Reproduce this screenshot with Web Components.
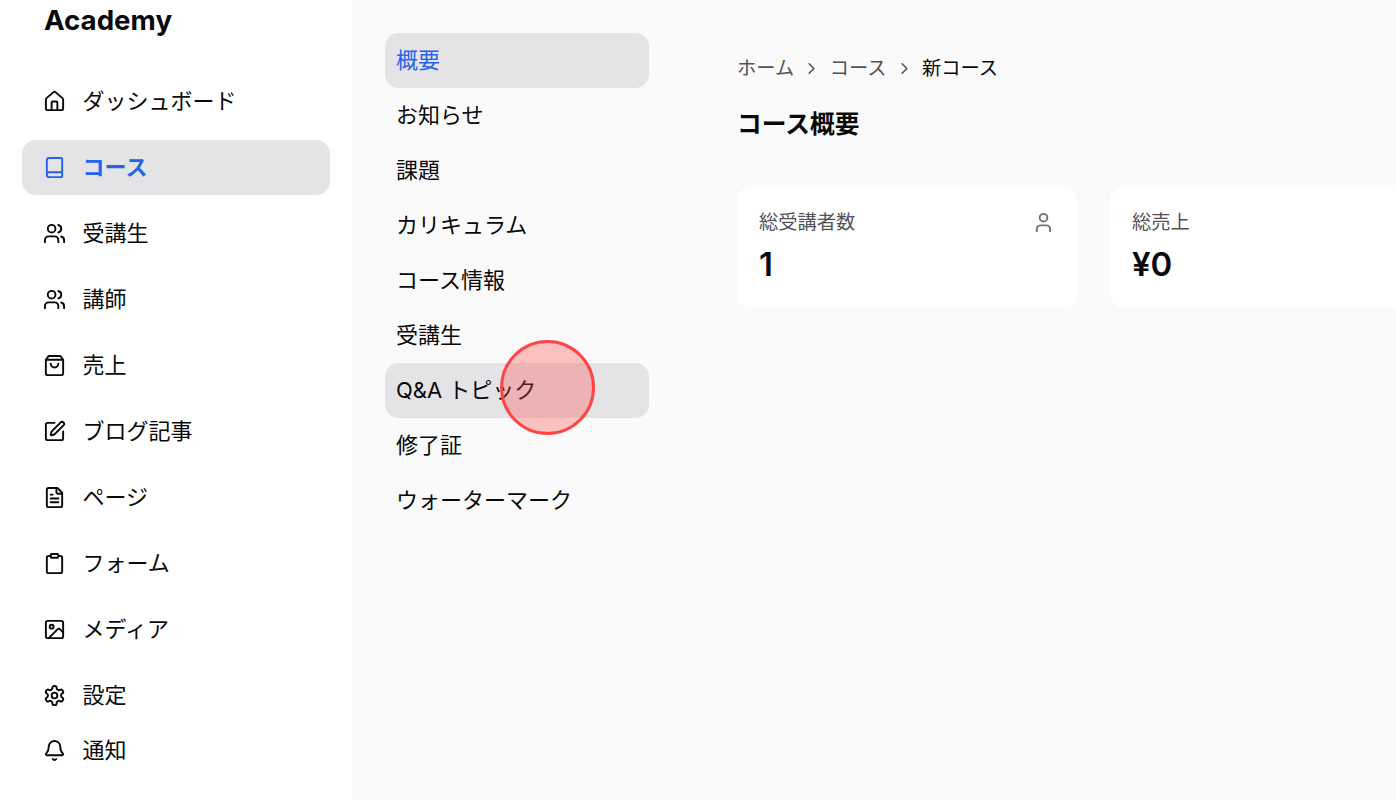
<!DOCTYPE html>
<html lang="ja">
<head>
<meta charset="utf-8">
<title>Academy</title>
<style>
  html, body {
    margin: 0;
    height: 100%;
    overflow: hidden;
    background: #fafafa;
    color: #09090b;
    font-family: Inter, "Noto Sans CJK JP", sans-serif;
  }
</style>
</head>
<body>
<app-shell>
  <side-bar slot="sidebar"></side-bar>
  <course-menu slot="menu"></course-menu>
  <course-overview slot="main"></course-overview>
</app-shell>
<click-marker></click-marker>

<script>
const ICONS = {
  home: `<path d="M15 21v-8a1 1 0 0 0-1-1h-4a1 1 0 0 0-1 1v8"/><path d="M3 10a2 2 0 0 1 .709-1.528l7-5.999a2 2 0 0 1 2.582 0l7 5.999A2 2 0 0 1 21 10v9a2 2 0 0 1-2 2H5a2 2 0 0 1-2-2z"/>`,
  book: `<path d="M4 19.5v-15A2.5 2.5 0 0 1 6.5 2H19a1 1 0 0 1 1 1v18a1 1 0 0 1-1 1H6.5a1 1 0 0 1 0-5H20"/>`,
  users: `<path d="M16 21v-2a4 4 0 0 0-4-4H6a4 4 0 0 0-4 4v2"/><circle cx="9" cy="7" r="4"/><path d="M22 21v-2a4 4 0 0 0-3-3.87"/><path d="M16 3.13a4 4 0 0 1 0 7.75"/>`,
  bag: `<path d="M6 2 3 6v14a2 2 0 0 0 2 2h14a2 2 0 0 0 2-2V6l-3-4Z"/><path d="M3 6h18"/><path d="M16 10a4 4 0 0 1-8 0"/>`,
  pen: `<path d="M12 3H5a2 2 0 0 0-2 2v14a2 2 0 0 0 2 2h14a2 2 0 0 0 2-2v-7"/><path d="M18.375 2.625a1 1 0 0 1 3 3l-9.013 9.014a2 2 0 0 1-.853.505l-2.873.84a.5.5 0 0 1-.62-.62l.84-2.873a2 2 0 0 1 .506-.852z"/>`,
  file: `<path d="M15 2H6a2 2 0 0 0-2 2v16a2 2 0 0 0 2 2h12a2 2 0 0 0 2-2V7Z"/><path d="M14 2v4a2 2 0 0 0 2 2h4"/><path d="M10 9H8"/><path d="M16 13H8"/><path d="M16 17H8"/>`,
  clipboard: `<rect width="8" height="4" x="8" y="2" rx="1" ry="1"/><path d="M16 4h2a2 2 0 0 1 2 2v14a2 2 0 0 1-2 2H6a2 2 0 0 1-2-2V6a2 2 0 0 1 2-2h2"/>`,
  image: `<rect width="18" height="18" x="3" y="3" rx="2" ry="2"/><circle cx="9" cy="9" r="2"/><path d="m21 15-3.086-3.086a2 2 0 0 0-2.828 0L6 21"/>`,
  settings: `<path d="M12.22 2h-.44a2 2 0 0 0-2 2v.18a2 2 0 0 1-1 1.73l-.43.25a2 2 0 0 1-2 0l-.15-.08a2 2 0 0 0-2.73.73l-.22.38a2 2 0 0 0 .73 2.73l.15.1a2 2 0 0 1 1 1.72v.51a2 2 0 0 1-1 1.74l-.15.09a2 2 0 0 0-.73 2.73l.22.38a2 2 0 0 0 2.73.73l.15-.08a2 2 0 0 1 2 0l.43.25a2 2 0 0 1 1 1.73V20a2 2 0 0 0 2 2h.44a2 2 0 0 0 2-2v-.18a2 2 0 0 1 1-1.73l.43-.25a2 2 0 0 1 2 0l.15.08a2 2 0 0 0 2.73-.73l.22-.39a2 2 0 0 0-.73-2.73l-.15-.08a2 2 0 0 1-1-1.74v-.5a2 2 0 0 1 1-1.74l.15-.09a2 2 0 0 0 .73-2.73l-.22-.38a2 2 0 0 0-2.73-.73l-.15.08a2 2 0 0 1-2 0l-.43-.25a2 2 0 0 1-1-1.73V4a2 2 0 0 0-2-2z"/><circle cx="12" cy="12" r="3"/>`,
  bell: `<path d="M10.268 21a2 2 0 0 0 3.464 0"/><path d="M3.262 15.326A1 1 0 0 0 4 17h16a1 1 0 0 0 .74-1.673C19.41 13.956 18 12.499 18 8A6 6 0 0 0 6 8c0 4.499-1.411 5.956-2.738 7.326"/>`,
  user: `<path d="M19 21v-2a4 4 0 0 0-4-4H9a4 4 0 0 0-4 4v2"/><circle cx="12" cy="7" r="4"/>`,
  chevron: `<path d="m9 18 6-6-6-6"/>`,
};

function icon(name, size = 23) {
  return `<svg xmlns="http://www.w3.org/2000/svg" width="${size}" height="${size}" viewBox="0 0 24 24" fill="none" stroke="currentColor" stroke-width="2" stroke-linecap="round" stroke-linejoin="round">${ICONS[name]}</svg>`;
}

class AppShell extends HTMLElement {
  connectedCallback() {
    const shadow = this.attachShadow({ mode: "open" });
    shadow.innerHTML = `
      <style>
      :host {
        display: grid;
        grid-template-columns: 352px 330px 1fr;
        height: 800px;
        overflow: hidden;
      }
      </style>
      <slot name="sidebar"></slot>
      <slot name="menu"></slot>
      <slot name="main"></slot>
    `;
  }
}

class NavLink extends HTMLElement {
  connectedCallback() {
    const shadow = this.attachShadow({ mode: "open" });
    shadow.innerHTML = `
      <style>
      :host {
        display: flex;
        align-items: center;
        gap: 16.5px;
        height: 55px;
        padding: 0 21px;
        border-radius: 13.75px;
        font-size: 22px;
        line-height: 33px;
      }
      :host([active]) {
        background: #e4e4e7;
        color: #2563eb;
        font-weight: 600;
      }
      svg { flex: none; display: block; }
      </style>
      ${icon(this.getAttribute("icon"))}
      <slot></slot>
    `;
  }
}

class SideBar extends HTMLElement {
  connectedCallback() {
    const shadow = this.attachShadow({ mode: "open" });
    const links = [
      ["home", "ダッシュボード"],
      ["book", "コース", true],
      ["users", "受講生"],
      ["users", "講師"],
      ["bag", "売上"],
      ["pen", "ブログ記事"],
      ["file", "ページ"],
      ["clipboard", "フォーム"],
      ["image", "メディア"],
      ["settings", "設定"],
    ];
    shadow.innerHTML = `
      <style>
      :host {
        display: flex;
        flex-direction: column;
        background: #fff;
        padding: 0 22px;
        overflow: hidden;
      }
      .logo {
        margin: 0 0 36px 22px;
        padding-top: 2px;
        font-size: 27.7px;
        line-height: 36px;
        font-weight: 700;
      }
      nav { display: flex; flex-direction: column; gap: 11px; }
      </style>
      <div class="logo">Academy</div>
      <nav>
        ${links.map(([name, label, active]) =>
          `<nav-link icon="${name}"${active ? " active" : ""}>${label}</nav-link>`).join("")}
      </nav>
      <nav-link icon="bell">通知</nav-link>
    `;
  }
}

class MenuItem extends HTMLElement {
  connectedCallback() {
    const shadow = this.attachShadow({ mode: "open" });
    shadow.innerHTML = `
      <style>
      :host {
        display: flex;
        align-items: center;
        height: 55px;
        padding: 0 11px;
        border-radius: 13.75px;
        font-size: 22px;
        line-height: 33px;
      }
      :host([active]) { background: #e4e4e7; color: #2563eb; }
      :host([hover]) { background: #e4e4e7; }
      </style>
      <slot></slot>
    `;
  }
}

class CourseMenu extends HTMLElement {
  connectedCallback() {
    const shadow = this.attachShadow({ mode: "open" });
    shadow.innerHTML = `
      <style>
      :host {
        display: flex;
        flex-direction: column;
        padding: 33px;
      }
      </style>
      <menu-item active>概要</menu-item>
      <menu-item>お知らせ</menu-item>
      <menu-item>課題</menu-item>
      <menu-item>カリキュラム</menu-item>
      <menu-item>コース情報</menu-item>
      <menu-item>受講生</menu-item>
      <menu-item hover>Q&amp;A トピック</menu-item>
      <menu-item>修了証</menu-item>
      <menu-item>ウォーターマーク</menu-item>
    `;
  }
}

class BreadCrumb extends HTMLElement {
  connectedCallback() {
    const shadow = this.attachShadow({ mode: "open" });
    shadow.innerHTML = `
      <style>
      :host {
        display: flex;
        align-items: center;
        gap: 8.25px;
        font-size: 19.25px;
        line-height: 27.5px;
        color: #52525b;
      }
      .current { color: #09090b; }
      svg { display: block; }
      </style>
      <a>ホーム</a>${icon("chevron", 19)}<a>コース</a>${icon("chevron", 19)}<span class="current">新コース</span>
    `;
  }
}

class StatCard extends HTMLElement {
  connectedCallback() {
    const shadow = this.attachShadow({ mode: "open" });
    const iconName = this.getAttribute("icon");
    shadow.innerHTML = `
      <style>
      :host {
        display: block;
        flex: none;
        box-sizing: border-box;
        width: 340px;
        height: 121px;
        padding: 21px 22px 0 22px;
        background: #fff;
        border-radius: 13.75px;
      }
      .head {
        display: flex;
        justify-content: space-between;
        align-items: center;
        height: 27.5px;
        font-size: 19.25px;
        color: #52525b;
      }
      .head svg { color: #71717a; display: block; margin-top: 3px; }
      .value {
        margin-top: 9px;
        font-size: 33px;
        line-height: 41px;
        font-weight: 600;
      }
      </style>
      <div class="head"><span>${this.getAttribute("label")}</span>${iconName ? icon(iconName) : ""}</div>
      <div class="value">${this.getAttribute("value")}</div>
    `;
  }
}

class CourseOverview extends HTMLElement {
  connectedCallback() {
    const shadow = this.attachShadow({ mode: "open" });
    shadow.innerHTML = `
      <style>
      :host {
        display: block;
        padding: 55px 0 0 55px;
        overflow: hidden;
      }
      h1 {
        margin: 25px 0 46px;
        font-size: 24.75px;
        line-height: 33px;
        font-weight: 700;
      }
      .stats { display: flex; gap: 33px; }
      </style>
      <bread-crumb></bread-crumb>
      <h1>コース概要</h1>
      <div class="stats">
        <stat-card label="総受講者数" value="1" icon="user"></stat-card>
        <stat-card label="総売上" value="¥0"></stat-card>
      </div>
    `;
  }
}

// the red dot marking the pointer, sits over the menu
class ClickMarker extends HTMLElement {
  connectedCallback() {
    const shadow = this.attachShadow({ mode: "open" });
    shadow.innerHTML = `
      <style>
      :host {
        position: absolute;
        left: 500px;
        top: 340px;
        box-sizing: border-box;
        width: 95px;
        height: 95px;
        border: 3px solid #ff4444;
        border-radius: 50%;
        background: rgba(255, 68, 68, 0.31);
        pointer-events: none;
      }
      </style>
    `;
  }
}

customElements.define("app-shell", AppShell);
customElements.define("nav-link", NavLink);
customElements.define("side-bar", SideBar);
customElements.define("menu-item", MenuItem);
customElements.define("course-menu", CourseMenu);
customElements.define("bread-crumb", BreadCrumb);
customElements.define("stat-card", StatCard);
customElements.define("course-overview", CourseOverview);
customElements.define("click-marker", ClickMarker);
</script>
</body>
</html>
